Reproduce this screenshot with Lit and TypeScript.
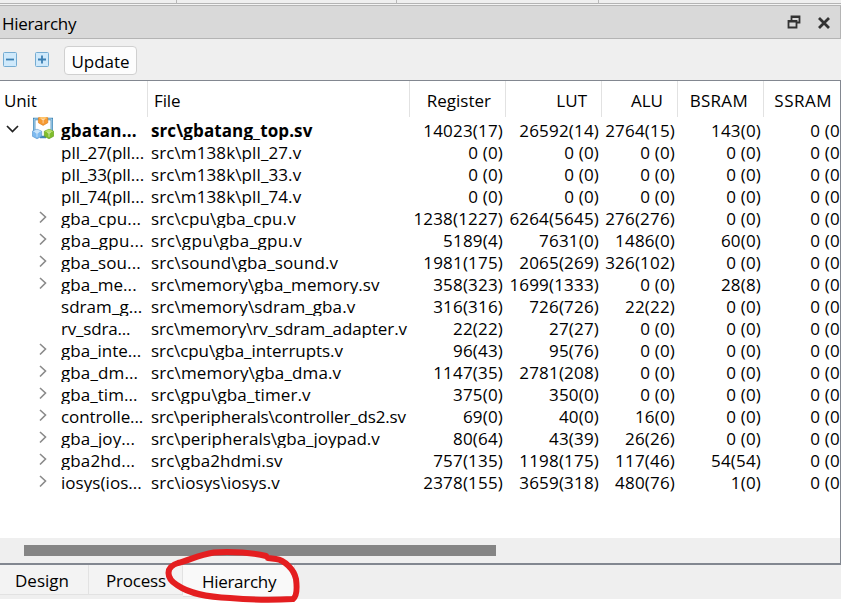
import { LitElement, html, svg, css, nothing } from "lit";
import { customElement } from "lit/decorators.js";
import { styleMap } from "lit/directives/style-map.js";

interface Unit {
  name: string;
  nameTracking: number;
  file: string;
  tracking: number;
  counts: string[];
  kind: "top" | "leaf" | "branch";
}

const unit = (kind: Unit["kind"], name: string, nameTracking: number, file: string, tracking: number, ...counts: string[]): Unit => ({ kind, name, nameTracking, file, tracking, counts });

const UNITS: Unit[] = [
  unit("top", "gbatan...", 0.2, "src\\gbatang_top.sv", 0.1, "14023(17)", "26592(14)", "2764(15)", "143(0)"),
  unit("leaf", "pll_27(pll...", 0, "src\\m138k\\pll_27.v", 0.11, "0 (0)", "0 (0)", "0 (0)", "0 (0)"),
  unit("leaf", "pll_33(pll...", 0, "src\\m138k\\pll_33.v", 0.11, "0 (0)", "0 (0)", "0 (0)", "0 (0)"),
  unit("leaf", "pll_74(pll...", 0, "src\\m138k\\pll_74.v", 0.11, "0 (0)", "0 (0)", "0 (0)", "0 (0)"),
  unit("branch", "gba_cpu...", 0.12, "src\\cpu\\gba_cpu.v", 0.1, "1238(1227)", "6264(5645)", "276(276)", "0 (0)"),
  unit("branch", "gba_gpu...", 0.3, "src\\gpu\\gba_gpu.v", 0.35, "5189(4)", "7631(0)", "1486(0)", "60(0)"),
  unit("branch", "gba_sou...", 0.12, "src\\sound\\gba_sound.v", 0.14, "1981(175)", "2065(269)", "326(102)", "0 (0)"),
  unit("branch", "gba_me...", 0.05, "src\\memory\\gba_memory.sv", 0.08, "358(323)", "1699(1333)", "0 (0)", "28(8)"),
  unit("leaf", "sdram_g...", 0.05, "src\\memory\\sdram_gba.v", 0.08, "316(316)", "726(726)", "22(22)", "0 (0)"),
  unit("leaf", "rv_sdra...", -0.2, "src\\memory\\rv_sdram_adapter.v", -0.09, "22(22)", "27(27)", "0 (0)", "0 (0)"),
  unit("branch", "gba_inte...", 0, "src\\cpu\\gba_interrupts.v", -0.06, "96(43)", "95(76)", "0 (0)", "0 (0)"),
  unit("branch", "gba_dm...", 0.12, "src\\memory\\gba_dma.v", 0.14, "1147(35)", "2781(208)", "0 (0)", "0 (0)"),
  unit("branch", "gba_tim...", 0.05, "src\\gpu\\gba_timer.v", 0.1, "375(0)", "350(0)", "0 (0)", "0 (0)"),
  unit("branch", "controlle...", -0.12, "src\\peripherals\\controller_ds2.sv", -0.15, "69(0)", "40(0)", "16(0)", "0 (0)"),
  unit("branch", "gba_joy...", 0.1, "src\\peripherals\\gba_joypad.v", 0, "80(64)", "43(39)", "26(26)", "0 (0)"),
  unit("branch", "gba2hd...", 0.12, "src\\gba2hdmi.sv", 0.1, "757(135)", "1198(175)", "117(46)", "54(54)"),
  unit("branch", "iosys(ios...", 0.05, "src\\iosys\\iosys.v", 0.1, "2378(155)", "3659(318)", "480(76)", "1(0)"),
];

const spacing = (px: number) => styleMap({ letterSpacing: `${px}px` });

const cube = (x: number, y: number, light: string, mid: string, dark: string) => svg`
  <path d="M${x} ${y + 2}l4.7-2 4.7 2v5l-4.7 2.6-4.7-2.6z" fill=${mid} stroke=${dark} stroke-width=".6"/>
  <path d="M${x + 0.3} ${y + 2.1}l4.4-1.8 4.4 1.8-4.4 1.8z" fill=${light}/>
  <path d="M${x + 4.7} ${y + 4}v3.6M${x + 3} ${y + 3.3}l1.7 .7 1.7-.7" stroke="#fff" stroke-opacity=".55" fill="none"/>`;

@customElement("app-root")
export class AppRoot extends LitElement {
  static styles = css`
    :host { display: flex; flex-direction: column; position: relative; width: 841px; height: 604px; overflow: hidden;
      box-sizing: border-box; background: #efefef; color: #000; font: 17px/22px "Open Sans", "Noto Sans", sans-serif; white-space: pre; }
    * { box-sizing: border-box; }
    svg { display: block; flex: none; }
    .strip { height: 5px; flex: none; display: grid; grid-template-columns: 177px 220px 202px 1fr; border-bottom: 1px solid #f3f3f3; }
    .strip i { border-right: 1px solid #b9b9b9; border-bottom: 1px solid #b4b4b4; }
    .strip i:last-child { border-right: 0; }
    .title { height: 34px; flex: none; display: flex; align-items: center; background: #d9d9d9; border: solid #b4b4b4; border-width: 1px 1px 1px 0; padding: 3px 9px 0 2px; }
    .title span { flex: 1; letter-spacing: -.3px; }
    .title svg { margin-top: -3px; }
    .title .close { margin: -1px 1px 0 17px; }
    .tools { height: 41px; flex: none; display: flex; padding: 7px 0 0 3px; }
    .tools svg { margin: 6px 17px 0 0; }
    .update { width: 73px; height: 29px; margin-left: -3px; border: 1px solid #d0d0d0; border-radius: 4px; background: #fdfdfd; display: flex; justify-content: center; padding-top: 4px; }
    .tree { height: 485px; flex: none; background: #fff; border: solid #828790; border-width: 1px 1px 2px 0; display: flex; flex-direction: column; overflow: hidden; }
    .row { display: grid; grid-template-columns: 148px 262px 96px 96px 76px 86px 84px; width: 848px; height: 22px; overflow: hidden; }
    .row.top { overflow: visible; }
    .head { height: 36px; margin-bottom: 3px; }
    .head span { border-right: 1px solid #e2e2e2; padding: 9px 14px 0 0; text-align: right; }
    .head span:nth-child(n + 6) { padding-right: 15px; letter-spacing: .3px; }
    .head span:last-child { padding-right: 16px; border: 0; letter-spacing: .5px; }
    .head span.left { text-align: left; padding-left: 4px; letter-spacing: -.1px; }
    .head span.left + .left { padding-left: 6px; }
    .name { display: flex; padding-left: 4px; min-width: 0; }
    .label, .file { clip-path: inset(0 0 2px 0); }
    .arrow { width: 57px; flex: none; display: flex; }
    .branch .arrow { padding: 2px 0 0 34px; }
    .file { padding-left: 3px; }
    .num { text-align: right; padding-right: 3px; letter-spacing: .18px; }
    .top .label, .top .file { font-weight: 700; }
    .logo { margin: -3px 0 0 10px; }
    .scroll { height: 25px; flex: none; margin-top: auto; background: #efefef; padding: 7px 0 0 24px; }
    .thumb { width: 472px; height: 11px; background: #858585; }
    .tabs { height: 34px; flex: none; display: flex; }
    .tab { height: 30px; background: #f3f3f3; border: solid #e2e2e2; border-width: 0 1px 1px 0; padding: 5px 0 0 15px; }
    .design { width: 89px; }
    .process { width: 94px; padding-left: 17px; letter-spacing: -.2px; }
    .active { width: 112px; height: 32px; background: #f9f9f9; padding: 6px 0 0 19px; letter-spacing: -.3px; }
    .foot { flex: 1; background: #fff; }
    .ring { position: absolute; left: 160px; top: 544px; }
  `;

  arrow(kind: Unit["kind"]) {
    if (kind === "leaf") return nothing;
    if (kind === "branch")
      return html`<svg width="10" height="14"><path d="M2 2l5.5 5L2 12.5" fill="none" stroke="#8a8a8a" stroke-width="1.6"/></svg>`;
    return html`<svg width="18" height="22"><path d="M3 6l5.5 5.5L14 6" fill="none" stroke="#222" stroke-width="1.7"/></svg><svg class="logo" width="22" height="24" viewBox="0 0 22 24">
        <path d="M2.2 15V2h17.6v13M8 20h6" fill="none" stroke="#4286b5" stroke-width="2.4"/>
        <path d="M2.2 15V2h17.6v13" fill="none" stroke="#b9e0f7" stroke-width=".9"/>
        ${cube(6.4, -1.2, "#ffc46b", "#f79a31", "#d87816")}
        ${cube(0.3, 12.2, "#c6e3fb", "#7dbaf0", "#528fc7")}
        ${cube(12.3, 12.2, "#b6df64", "#7fbd2c", "#5c9816")}
      </svg>`;
  }

  render() {
    return html`
      <div class="strip"><i></i><i></i><i></i><i></i></div>
      <div class="title"><span>Hierarchy</span><svg width="14" height="14"><path d="M4.5 5V1.5h8v6H10M4 2h9M1.5 6h8v6.5h-8zM1 6.5h9" fill="none" stroke="#333" stroke-width="1.8"/></svg><svg class="close" width="12" height="12"><path d="M1 1l10 10M11 1L1 11" stroke="#333" stroke-width="2.8"/></svg></div>
      <div class="tools">${[false, true].map((plus) => html`<svg width="15" height="16"><rect x=".5" y=".5" width="13" height="14" rx="1" fill="#cfe9fb" stroke="#75acd2"/><path d=${plus ? "M3 7.5h8M7 3.5v8" : "M3 7.5h8"} stroke="#3b7fb3" stroke-width="1.8"/></svg>`)}<div class="update">Update</div></div>
      <div class="tree">
        <div class="row head"><span class="left">Unit</span><span class="left">File</span>${["Register", "LUT", "ALU", "BSRAM", "SSRAM"].map((h) => html`<span>${h}</span>`)}</div>
        ${UNITS.map((u) => html`<div class="row ${u.kind}"><div class="name"><div class="arrow">${this.arrow(u.kind)}</div><span class="label" style=${spacing(u.nameTracking)}>${u.name}</span></div><div class="file" style=${spacing(u.tracking)}>${u.file}</div>${[...u.counts, "0 (0)"].map((n) => html`<div class="num">${n}</div>`)}</div>`)}
        <div class="scroll"><div class="thumb"></div></div>
      </div>
      <div class="tabs"><div class="tab design">Design</div><div class="tab process">Process</div><div class="tab active">Hierarchy</div></div>
      <div class="foot"></div>
      <svg class="ring" width="145" height="60"><path d="M106 12C94 9 72 7 54 8.500C38 11 30 16 18 19C5 23 6 34 17 41C30 50 47 53 70 54C92 56 116 56 133 55C137 52 137 43 136 35C134 25 124 16 116 15L108 14" fill="none" stroke="#e41e20" stroke-width="6" stroke-linecap="round" stroke-linejoin="round"/></svg>
    `;
  }
}
